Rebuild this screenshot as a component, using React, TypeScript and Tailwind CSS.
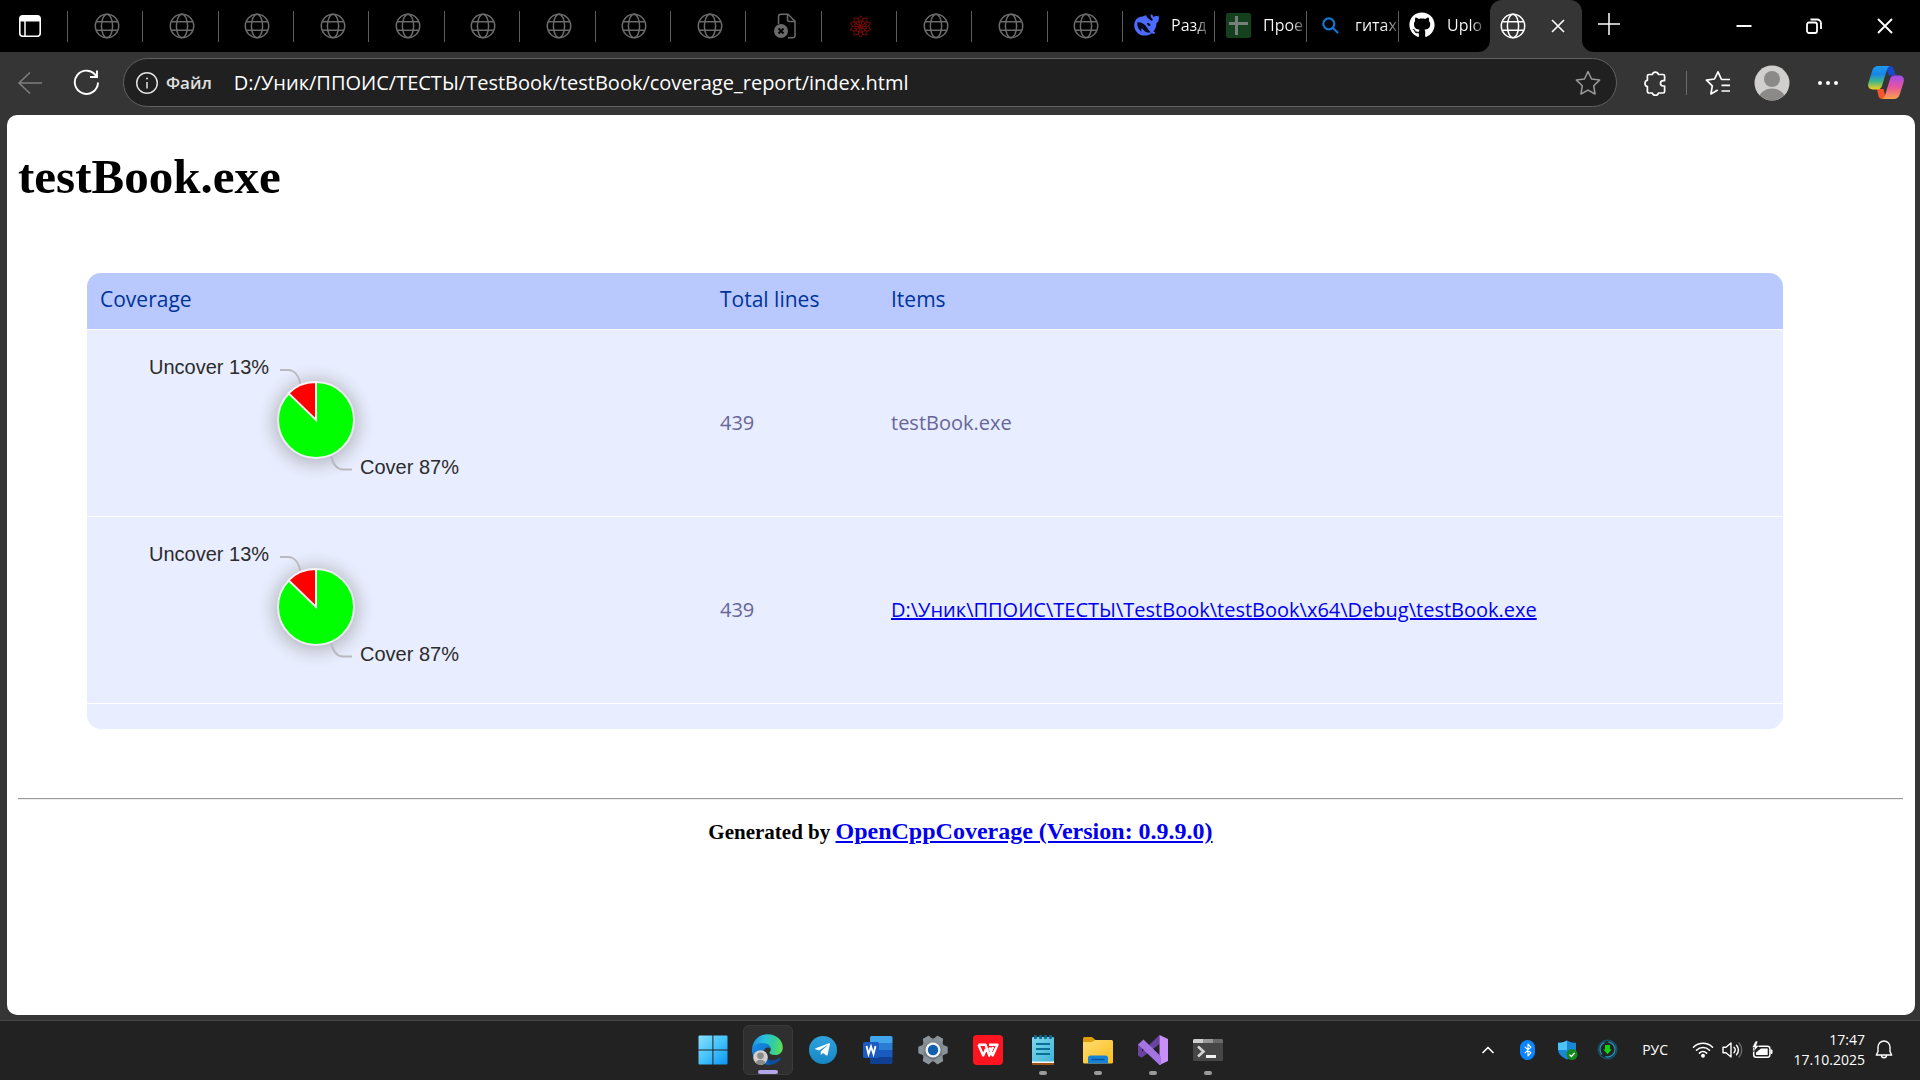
import React from "react";
import { FaGithub, FaTelegramPlane } from "react-icons/fa";
import { Bluetooth, ChevronUp } from "lucide-react";

const UI_FONT = "font-['Open_Sans','Noto_Sans',sans-serif]";

/* ---------- Tab strip icons ---------- */

function Globe() {
  return (
    <svg width="26" height="26" viewBox="0 0 26 26" fill="none" stroke="currentColor" strokeWidth="1.5">
      <circle cx="13" cy="13" r="11.7" />
      <ellipse cx="13" cy="13" rx="5.6" ry="11.7" />
      <path d="M2.2 8.7h21.6M2.2 17.3h21.6" />
    </svg>
  );
}

function BrokenFile() {
  return (
    <svg width="26" height="26" viewBox="0 0 26 26" fill="none">
      <path d="M6.5 11V3.5A2.3 2.3 0 0 1 8.8 1.200h7.200l7 7v14.300a2.300 2.300 0 0 1-2.300 2.300H16" stroke="#6b6b6b" strokeWidth="1.500" />
      <path d="M15.500 1.200v5.300a2 2 0 0 0 2 2H23" stroke="#6b6b6b" strokeWidth="1.500" />
      <circle cx="9" cy="18" r="7" fill="#6b6b6b" />
      <path d="m6.500 15.500 5 5m0-5-5 5" stroke="#000" strokeWidth="1.800" />
    </svg>
  );
}

function Spikey() {
  return (
    <svg width="23" height="23" viewBox="-12 -12 24 24" fill="none" stroke="#6a0a04" strokeWidth="1.100">
      {[0, 36, 72, 108, 144, 180, 216, 252, 288, 324].map((a) => (
        <path key={a} transform={`rotate(${a})`} d="M-3 -7.500 0 -11 3 -7.500M-2.400 -7.400 0 0 2.400 -7.400M-2.200 -4.500 0 -6.500 2.200 -4.500" />
      ))}
    </svg>
  );
}

function Whale() {
  return (
    <svg width="25" height="22" viewBox="0 0 25 22" fill="#4d6bfe">
      <path d="M24.500 1.600c-.6.500-1.300.6-2 .5-1.200-.1-2.200.3-3 1.200-.2-1.300-.9-2.100-2-2.700-.6-.3-.9-.6-.9-.3-.2 2 .3 3.500 1.700 4.600.5.400.6.700.4 1.200-.3.600-.9.700-1.600.3-1.500-.8-2.700-2-4-3.100-.5-.4-.8-.8-.4-1.100.3-.3 0-.7-.7-.7-1.300 0-2.300.5-3.500 1C3.600 2.900.3 6.200.2 11.200.1 16 4.100 21.400 10.400 21.600c3 .1 5.200-.7 7.200-2.300 1 .4 2.100.5 3 .2.800-.3.700-.9.100-1.200-.7-.3-1-.5-1.300-.7 1.900-2.300 3-5 3.100-8.100 0-.6.200-.8.700-1C24.600 7.900 25.500 4 24.500 1.600Z" />
      <path fill="#000" d="M3.500 8.200c3.300-.4 6 .9 8 3.400 1.800 2.300 3 4.800 5.300 6.700-4 1.200-6.500-.8-8.200-3.200-.5-.7-1.200-.7-1.300.1-.1.900.2 1.600.6 2.400-3.200-1.800-5.200-5.200-4.400-9.400Z" opacity=".9" />
      <path fill="#000" d="M13 9.200c1.300-.8 3.200.3 3.600 2.300-1.300.9-3.400-.2-3.600-2.300Z" />
    </svg>
  );
}

function Sheet() {
  return (
    <svg width="25" height="25" viewBox="0 0 25 25">
      <rect width="25" height="25" rx="2" fill="#14401d" />
      <path d="M10.500 3v19M3 10.500h19" stroke="#76807a" strokeWidth="3" />
    </svg>
  );
}

function SearchBlue() {
  return (
    <svg width="17" height="17" viewBox="0 0 17 17" fill="none" stroke="#0f78d4" strokeWidth="2.200">
      <circle cx="6.800" cy="6.800" r="5.500" />
      <path d="m10.800 10.800 5.200 5.200" />
    </svg>
  );
}

function TabActions() {
  return (
    <svg width="22" height="22" viewBox="0 0 22 22">
      <rect x=".8" y=".8" width="20.400" height="20.400" rx="3" fill="none" stroke="#fff" strokeWidth="1.600" />
      <path d="M1 3.500A2.500 2.500 0 0 1 3.500 1h15A2.500 2.500 0 0 1 21 3.500V6.500H1Z" fill="#fff" />
      <path d="M6 6v15" stroke="#fff" strokeWidth="1.500" />
    </svg>
  );
}

/* ---------- Toolbar icons ---------- */

const BackArrow = () => (
  <svg width="26" height="24" viewBox="0 0 26 24" fill="none" stroke="#7d7d7d" strokeWidth="1.600">
    <path d="M25 12H2M13 1.500 2 12l11 10.500" />
  </svg>
);

const Reload = () => (
  <svg width="27" height="27" viewBox="0 0 27 27" fill="none" stroke="#fff" strokeWidth="1.900">
    <path d="M23.300 7.200A11.600 11.600 0 1 0 25 13.500" />
    <path d="M24 1.500v6.500h-7" />
  </svg>
);

const Info = () => (
  <svg width="24" height="24" viewBox="0 0 24 24" fill="none" stroke="#e0e0e0" strokeWidth="1.500">
    <circle cx="12" cy="12" r="10.300" />
    <path d="M12 11v6.500" />
    <circle cx="12" cy="7.500" r="1" fill="#e0e0e0" stroke="none" />
  </svg>
);

const STAR = "m13 1.500 3.500 7.500 8.100 1.100-5.900 5.700 1.400 8.200L13 20.100 5.900 24l1.400-8.200L1.400 10.100 9.500 9Z";

const StarOutline = () => (
  <svg width="26" height="26" viewBox="0 0 26 26" fill="none" stroke="#9a9a9a" strokeWidth="1.500" strokeLinejoin="round">
    <path d={STAR} />
  </svg>
);

const Puzzle = () => (
  <svg width="24" height="26" viewBox="0 0 24 26" fill="none" stroke="#fff" strokeWidth="1.700" strokeLinejoin="round">
    <path d="M6 4.500h3.300a3.200 3.200 0 0 1 6.200 0H20a1.600 1.600 0 0 1 1.600 1.600v4.500h-1.400a2.700 2.700 0 0 0 0 5.400h1.400v5.400A1.600 1.600 0 0 1 20 23h-4.500a3.200 3.200 0 0 1-6.200 0H6a1.600 1.600 0 0 1-1.600-1.600V16.500a3.200 3.200 0 0 1 0-6.200V6.100A1.600 1.600 0 0 1 6 4.500Z" />
  </svg>
);

const Favorites = () => (
  <svg width="26" height="26" viewBox="0 0 26 26" fill="none" stroke="#fff" strokeWidth="1.700" strokeLinejoin="round">
    <path d="M25 9.500h-8.500L13 1.800 9.500 9 1.400 10.100l5.900 5.700L5.900 24l6.800-3.900M16.500 15.300H25M16.500 21H25" />
  </svg>
);

const Avatar = ({ size }: { size: number }) => (
  <svg width={size} height={size} viewBox="0 0 36 36">
    <defs>
      <clipPath id={`avatar-${size}`}>
        <circle cx="18" cy="18" r="17.500" />
      </clipPath>
    </defs>
    <circle cx="18" cy="18" r="17.500" fill="#d0cfcd" />
    <g clipPath={`url(#avatar-${size})`} fill="#8c8a88">
      <circle cx="18" cy="14" r="8" />
      <ellipse cx="18" cy="35" rx="13.500" ry="11.500" />
    </g>
  </svg>
);

const Copilot = () => (
  <svg width="36" height="33" viewBox="0 0 36 33">
    <defs>
      <linearGradient id="cp-a" x1="0" y1="0" x2="0" y2="1">
        <stop offset="0" stopColor="#1f9bf0" />
        <stop offset=".35" stopColor="#1787e8" />
        <stop offset=".65" stopColor="#3fb58a" />
        <stop offset="1" stopColor="#f5d020" />
      </linearGradient>
      <linearGradient id="cp-b" x1="0" y1="0" x2="0" y2="1">
        <stop offset="0" stopColor="#a24bf0" />
        <stop offset=".5" stopColor="#e8559b" />
        <stop offset="1" stopColor="#fba24c" />
      </linearGradient>
    </defs>
    <path d="M17 0h4.500c2.300 0 3.800 1.200 4.500 3.400l1.800 6H21Z" fill="#1a49c9" />
    <path d="M9 23h6.500l2.500 10h-3.500c-2.300 0-3.500-1.200-4.100-3.300Z" fill="#f4572e" />
    <path d="M10 0h12c-1.700.6-2.500 2-3.200 4.300l-4.600 15c-.8 2.700-2.100 4.200-4.700 4.200H4.700C1 23.500-.6 20.700.3 17.300L4.300 4.500C5.200 1.600 7.200 0 10 0Z" fill="url(#cp-a)" />
    <path d="M26 33H14c1.700-.6 2.500-2 3.200-4.300l4.600-15c.8-2.700 2.100-4.200 4.700-4.200h4.800c3.700 0 5.300 2.800 4.400 6.200l-4 12.800C30.800 31.400 28.800 33 26 33Z" fill="url(#cp-b)" />
  </svg>
);

/* ---------- Taskbar icons ---------- */

const WindowsLogo = () => (
  <svg width="30" height="30" viewBox="0 0 30 30">
    <defs>
      <linearGradient id="win" x1="0" y1="0" x2="30" y2="30" gradientUnits="userSpaceOnUse">
        <stop offset="0" stopColor="#8ae2fd" />
        <stop offset=".5" stopColor="#45c2fa" />
        <stop offset="1" stopColor="#0a93f5" />
      </linearGradient>
    </defs>
    <path fill="url(#win)" d="M1.500.5h12.900v13.900H.5V1.500a1 1 0 0 1 1-1ZM15.400.5h13.100a1 1 0 0 1 1 1v12.900H15.400ZM.5 15.400h13.900v14.100H1.500a1 1 0 0 1-1-1ZM15.400 15.400h14.100v13.100a1 1 0 0 1-1 1H15.400Z" />
  </svg>
);

const EdgeLogo = () => (
  <svg width="31" height="31" viewBox="0 0 31 31">
    <defs>
      <linearGradient id="edge-a" x1="0" y1="8" x2="31" y2="14" gradientUnits="userSpaceOnUse">
        <stop offset="0" stopColor="#1b8fe0" />
        <stop offset=".35" stopColor="#2ac0e0" />
        <stop offset=".7" stopColor="#32cf9a" />
        <stop offset="1" stopColor="#66e04c" />
      </linearGradient>
      <linearGradient id="edge-b" x1="0" y1="10" x2="16" y2="31" gradientUnits="userSpaceOnUse">
        <stop offset="0" stopColor="#1790e6" />
        <stop offset="1" stopColor="#0c5cb8" />
      </linearGradient>
    </defs>
    <path fill="#0d4f9e" d="M12 15c-1.500 5.500 1.500 10.500 7 11.200 3.600.4 6.300-.6 8.800-2.400.8-.5 1.300.1.900.8C26 29 21 31.300 15.500 30.800 9 30 6 20 12 15Z" />
    <path fill="url(#edge-b)" d="M.3 14C1.500 9 7 7.600 11 8c4.500.4 7.500 3.400 7.500 6.500-2.500-2.200-6.500-.8-6.800 3.500-.4 5.500 3 10.500 8 12.300C8.500 32.600-1 24-.0 15Z" />
    <path fill="url(#edge-a)" d="M.2 14.500C.8 6 7.500.2 15.700.2c8.300 0 15.100 5.800 15.100 13.200 0 4.800-3.500 7.700-8 7.700-3.500 0-5.300-1.200-5.300-2.300 0-.9 1.300-1.400 1.300-3.600 0-3.300-3.300-6.200-8-6.200C5.500 9 1.700 11 .2 14.500Z" />
  </svg>
);

const TelegramLogo = () => (
  <span className="flex size-7 items-center justify-center rounded-full bg-linear-to-b from-[#2fa3dd] to-[#1587c4] text-white">
    <FaTelegramPlane size={17} />
  </span>
);

const WordLogo = () => (
  <svg width="30" height="28" viewBox="0 0 30 28">
    <path fill="#41a5ee" d="M8.500 0H28a1.500 1.500 0 0 1 1.500 1.500V7H7V1.500A1.500 1.500 0 0 1 8.500 0Z" />
    <path fill="#2b7cd3" d="M7 7h22.500v7H7Z" />
    <path fill="#185abd" d="M7 14h22.500v7H7Z" />
    <path fill="#103f91" d="M7 21h22.500v5.500A1.500 1.500 0 0 1 28 28H8.500A1.500 1.500 0 0 1 7 26.500Z" />
    <rect x="0" y="6" width="16" height="16" rx="1.500" fill="#1b5bbf" />
    <path d="m3.500 10 2 8L8 10.500l2.500 7.500 2-8" fill="none" stroke="#fff" strokeWidth="1.900" />
  </svg>
);

const Gear = () => (
  <svg width="30" height="30" viewBox="-15 -15 30 30">
    <defs>
      <linearGradient id="gear" x1="0" y1="-14" x2="0" y2="14" gradientUnits="userSpaceOnUse">
        <stop offset="0" stopColor="#8d959c" />
        <stop offset="1" stopColor="#626d77" />
      </linearGradient>
    </defs>
    <g fill="url(#gear)">
      <circle r="11.500" />
      {[30, 90, 150, 210, 270, 330].map((a) => (
        <path key={a} transform={`rotate(${a})`} d="M-5.500 -9 -3.600 -14a1 1 0 0 1 1 -.7h5.200a1 1 0 0 1 1 .7L5.500 -9Z" />
      ))}
    </g>
    <circle r="7.500" fill="#f2f2f2" />
    <circle r="5.200" fill="#0f5fae" />
  </svg>
);

const WpsLogo = () => (
  <svg width="30" height="30" viewBox="0 0 30 30">
    <rect width="30" height="30" rx="4" fill="#ff1420" />
    <path d="M5.500 9.800h7l3.800 10.700L20 12M5.500 9.800l4.700 10.700 2.800-6.500M16 9.800h8.500L19.700 20.500l-3.400-8" fill="none" stroke="#fff" strokeWidth="2.400" strokeLinejoin="round" />
  </svg>
);

const Notepad = () => (
  <svg width="24" height="30" viewBox="0 0 24 30">
    <defs>
      <linearGradient id="note" x1="0" y1="0" x2="1" y2="1">
        <stop offset="0" stopColor="#7fd8ee" />
        <stop offset="1" stopColor="#40b4d6" />
      </linearGradient>
    </defs>
    <rect x="1" y="24" width="22" height="6" rx="1" fill="#9c4f17" />
    <rect x="1" y="22" width="22" height="6" fill="#f4f4f4" />
    <rect x="1" y="2" width="22" height="24.500" rx="1" fill="url(#note)" />
    <path d="M5 9h14M5 14h14M5 19h14" stroke="#0b6f96" strokeWidth="2" />
    <path d="M4.500 0v4M9.500 0v4M14.500 0v4M19.500 0v4" stroke="#0a6a90" strokeWidth="2.600" />
  </svg>
);

const Folder = () => (
  <svg width="30" height="28" viewBox="0 0 30 28">
    <defs>
      <linearGradient id="fold" x1="0" y1="0" x2="1" y2="1">
        <stop offset="0" stopColor="#ffdc72" />
        <stop offset="1" stopColor="#fdbf1c" />
      </linearGradient>
    </defs>
    <path d="M0 2.500A1.500 1.500 0 0 1 1.500 1H9l3.500 3v4H0Z" fill="#e09d08" />
    <path d="M0 6h9l3-2h16.500A1.500 1.500 0 0 1 30 5.500V26a1.500 1.500 0 0 1-1.500 1.500h-27A1.500 1.500 0 0 1 0 26Z" fill="url(#fold)" />
    <path d="M5 27.500V22a2.500 2.500 0 0 1 2.500-2.500h15A2.500 2.500 0 0 1 25 22v5.500Z" fill="#1683d8" />
    <path d="M8.500 23.500h13" stroke="#0a559c" strokeWidth="1.500" />
  </svg>
);

const VisualStudio = () => (
  <svg width="30" height="30" viewBox="0 0 30 30">
    <path d="M0 9.500 4 7.500v15L0 20.500Z" fill="#6a43a5" />
    <path d="M0 20.500 21.500 0v9L4 22.500Z" fill="#68439f" />
    <path d="M21.500 0 30 4v22l-8.500 4Z" fill="#c78ffa" />
    <path d="M0 9.500 5.500 4.500 23 21.500V30h-1.500Z" fill="#a574e3" />
  </svg>
);

const Terminal = () => (
  <svg width="30" height="22" viewBox="0 0 30 22">
    <rect width="30" height="22" rx="1.500" fill="#464646" />
    <path d="M1.500 0H10v4H0V1.500A1.500 1.500 0 0 1 1.500 0Z" fill="#cfcfcf" />
    <path d="M10 0h10v4H10Z" fill="#989898" />
    <path d="M20 0h8.500A1.500 1.500 0 0 1 30 1.500V4H20Z" fill="#6a6a6a" />
    <path d="m5 7.500 5.500 5-5.500 5" fill="none" stroke="#d2d2d2" strokeWidth="2.600" />
    <path d="M13 17.500h10" stroke="#f2f2f2" strokeWidth="3" />
  </svg>
);

/* ---------- Tray icons ---------- */

const Shield = () => (
  <svg width="20" height="20" viewBox="0 0 20 20">
    <path d="M9 .5c2.500 1.800 5.500 2.300 9 2.300v6.400c0 5-4 7.800-9 10.300-5-2.500-9-5.300-9-10.300V2.800c3.500 0 6.500-.5 9-2.300Z" fill="#1b85d6" />
    <path d="M9 .5v9.500H0V2.800c3.500 0 6.500-.5 9-2.300Z" fill="#4cc3f5" />
    <circle cx="14" cy="14.500" r="5.500" fill="#128a1d" />
    <path d="m11.500 14.600 1.900 1.900 3.300-3.600" fill="none" stroke="#fff" strokeWidth="1.300" />
  </svg>
);

const DownloadBadge = () => (
  <svg width="21" height="21" viewBox="0 0 21 21" fill="none">
    <circle cx="10.500" cy="10.500" r="9.300" stroke="#17506a" strokeWidth="1.500" />
    <circle cx="10.500" cy="10.500" r="7.500" stroke="#2394b8" strokeWidth="1.300" strokeDasharray="14 4" />
    <path d="M8 6h5v4.500h1.700l-4.200 4.700-4.200-4.700H8Z" fill="#12d312" />
  </svg>
);

const Wifi = () => (
  <svg width="22" height="17" viewBox="0 0 22 17" fill="none" stroke="#fff" strokeWidth="1.500" strokeLinecap="round">
    <path d="M1.500 6.200a13.400 13.400 0 0 1 19 0M4.500 9.200a9.200 9.200 0 0 1 13 0M7.400 12.100a5.100 5.100 0 0 1 7.200 0" />
    <circle cx="11" cy="14.800" r="1.200" fill="#fff" />
  </svg>
);

const Speaker = () => (
  <svg width="21" height="18" viewBox="0 0 21 18" fill="none" stroke="#fff" strokeWidth="1.400" strokeLinejoin="round" strokeLinecap="round">
    <path d="M1 6.200h3L9 2v14l-5-4.200H1Z" />
    <path d="M12 6.300a4 4 0 0 1 0 5.400M14.500 4.200a7 7 0 0 1 0 9.600" />
    <path d="M17 2a10.500 10.500 0 0 1 0 14" stroke="#6a6a6a" />
  </svg>
);

const Battery = () => (
  <svg width="21" height="18" viewBox="0 0 21 18">
    <rect x="1.700" y="5.200" width="16.200" height="11" rx="2.500" fill="none" stroke="#fff" strokeWidth="1.500" />
    <path d="M4 14V11.500L9 7.500H15.700V14Z" fill="#fff" />
    <path d="M18.500 8.500h1a1 1 0 0 1 1 1v2.500a1 1 0 0 1-1 1h-1Z" fill="#fff" />
    <path d="M3.500 0 0 6.500h2.500L1.500 11 7 4.500H4.500L6 0Z" fill="#fff" stroke="#222" strokeWidth=".6" />
  </svg>
);

const Bell = () => (
  <svg width="18" height="19" viewBox="0 0 18 19" fill="none" stroke="#fff" strokeWidth="1.400" strokeLinejoin="round">
    <path d="M9 1a6 6 0 0 0-6 6v4.500L1.300 15h15.400L15 11.500V7a6 6 0 0 0-6-6ZM6.500 15.300a2.500 2.500 0 0 0 5 0" />
  </svg>
);

/* ---------- Browser chrome ---------- */

function Divider() {
  return <span className="h-[31px] w-px shrink-0 bg-[#5c5c5c]" />;
}

const COLLAPSED: React.ReactNode[] = [
  ...Array.from({ length: 9 }, () => <Globe />),
  <BrokenFile />,
  <Spikey />,
  <Globe />,
  <Globe />,
  <Globe />,
];

const TITLED = [
  { title: "Разд", icon: <Whale /> },
  { title: "Прое", icon: <Sheet /> },
  { title: "гитах", icon: <SearchBlue /> },
  { title: "Uplo", icon: <FaGithub size={26} /> },
];

function TabStrip() {
  return (
    <div className="flex h-[52px] shrink-0 items-center bg-black text-white">
      <button aria-label="Tab actions" className="flex h-full w-[67px] shrink-0 items-center pl-[19px]">
        <TabActions />
      </button>
      <div role="tablist" className="flex h-full min-w-0 flex-1 items-center">
        <div className="flex h-full min-w-0 max-w-[1055px] flex-[14] items-center">
          {COLLAPSED.map((icon, i) => (
            <React.Fragment key={i}>
              <Divider />
              <button role="tab" aria-label={`Tab ${i + 1}`} className="flex h-full min-w-0 flex-1 items-center justify-center pl-[3px] text-[#6b6b6b]">
                {icon}
              </button>
            </React.Fragment>
          ))}
        </div>
        {TITLED.map((t) => (
          <React.Fragment key={t.title}>
            <Divider />
            <button role="tab" className={`flex h-full w-[91px] shrink-0 items-center gap-3 pb-0.5 pl-[10px] text-[16px] whitespace-nowrap ${UI_FONT}`}>
              <span className="flex w-[26px] shrink-0 justify-center">{t.icon}</span>
              <span className="bg-linear-to-r from-white from-70% to-[#555555] bg-clip-text text-transparent">{t.title}</span>
            </button>
          </React.Fragment>
        ))}
        <div className="relative flex h-full w-[92px] shrink-0 items-center justify-between rounded-t-xl bg-[#353535] pr-4 pl-[10px]">
          <svg className="absolute bottom-0 -left-3" width="12" height="12" viewBox="0 0 12 12">
            <path d="M12 0v12H0A12 12 0 0 0 12 0Z" fill="#353535" />
          </svg>
          <svg className="absolute -right-3 bottom-0" width="12" height="12" viewBox="0 0 12 12">
            <path d="M0 0v12h12A12 12 0 0 1 0 0Z" fill="#353535" />
          </svg>
          <button role="tab" aria-selected="true" aria-label="Coverage report">
            <Globe />
          </button>
          <button aria-label="Close tab">
            <svg width="16" height="16" viewBox="0 0 16 16" stroke="#fff" strokeWidth="1.600">
              <path d="m2 2 12 12M14 2 2 14" />
            </svg>
          </button>
        </div>
        <button aria-label="New tab" className="flex h-full w-[54px] shrink-0 items-center justify-center pb-1">
          <svg width="22" height="22" viewBox="0 0 22 22" stroke="#fff" strokeWidth="1.500">
            <path d="M11 0v22M0 11h22" />
          </svg>
        </button>
      </div>
      <div className="flex h-full shrink-0">
        <button aria-label="Minimize" className="flex w-[70px] items-center justify-center">
          <svg width="16" height="16" viewBox="0 0 16 16" stroke="#fff" strokeWidth="2">
            <path d="M.5 8h15" />
          </svg>
        </button>
        <button aria-label="Restore" className="flex w-[70px] items-center justify-center">
          <svg width="16" height="16" viewBox="0 0 16 16" fill="none" stroke="#fff" strokeWidth="1.800">
            <rect x="1" y="4.500" width="10" height="10.500" rx="2" />
            <path d="M4.500 1.500H11a4 4 0 0 1 4 4V11" />
          </svg>
        </button>
        <button aria-label="Close" className="flex w-[71px] items-center justify-center">
          <svg width="16" height="16" viewBox="0 0 16 16" stroke="#fff" strokeWidth="1.900">
            <path d="m1 1 14 14M15 1 1 15" />
          </svg>
        </button>
      </div>
    </div>
  );
}

function Toolbar() {
  return (
    <div className={`flex h-[63px] shrink-0 items-center pr-[5px] pb-0.5 text-white ${UI_FONT}`}>
      <button aria-label="Back" className="flex w-[60px] justify-center">
        <BackArrow />
      </button>
      <button aria-label="Reload" className="flex w-[52px] justify-center">
        <Reload />
      </button>
      <div className="mx-[11px] flex h-[49px] min-w-0 flex-1 items-center rounded-full border border-[#626262] bg-[#202020] pr-[15px] pl-[11px]">
        <button className="flex items-center gap-[7px] text-[17px] font-semibold text-[#e0e0e0]">
          <Info />
          Файл
        </button>
        <input
          aria-label="Address"
          className="ml-[22px] min-w-0 flex-1 bg-transparent text-[20px] text-white outline-none"
          defaultValue="D:/Уник/ППОИС/ТЕСТЫ/TestBook/testBook/coverage_report/index.html"
        />
        <button aria-label="Add to favorites">
          <StarOutline />
        </button>
      </div>
      <button aria-label="Extensions" className="flex w-[54px] justify-center">
        <Puzzle />
      </button>
      <span className="mx-1 h-6 w-px bg-[#6a6a6a]" />
      <button aria-label="Favorites" className="flex w-[54px] justify-center">
        <Favorites />
      </button>
      <button aria-label="Profile" className="flex w-[54px] justify-center">
        <Avatar size={36} />
      </button>
      <button aria-label="Settings and more" className="flex w-[58px] justify-center">
        <svg width="22" height="6" viewBox="0 0 22 6" fill="#fff">
          <circle cx="3" cy="3" r="2" />
          <circle cx="11" cy="3" r="2" />
          <circle cx="19" cy="3" r="2" />
        </svg>
      </button>
      <button aria-label="Copilot" className="flex w-[58px] justify-center">
        <Copilot />
      </button>
    </div>
  );
}

/* ---------- Report page ---------- */

function CoveragePie() {
  return (
    <svg className="block" width="450" height="150" viewBox="0 0 450 150" role="img" aria-label="Cover 87%, uncover 13%">
      <defs>
        <radialGradient id="halo">
          <stop offset=".55" stopColor="#8c8c8c" stopOpacity=".5" />
          <stop offset=".75" stopColor="#a0a0a0" stopOpacity=".22" />
          <stop offset="1" stopColor="#e8edff" stopOpacity="0" />
        </radialGradient>
      </defs>
      <circle cx="216" cy="74" r="61" fill="url(#halo)" />
      <g fill="none" stroke="#b9b9bf" strokeWidth="2">
        <path d="M180 22h8c7 0 11 7 12.500 14" />
        <path d="M231 108c2 8 6 13.500 12 13.500h9" />
      </g>
      <circle cx="216" cy="72" r="38" fill="#00ff00" stroke="#eef0f4" strokeWidth="2" />
      <path d="M216 72V34a38 38 0 0 0-27.500 11.200Z" fill="#ff0000" stroke="#f4f4f8" strokeWidth="2" />
      <g className="font-['Liberation_Sans',Arial,sans-serif]" fontSize="20" fill="#2b2b2b">
        <text x="49" y="26">Uncover 13%</text>
        <text x="260" y="126">Cover 87%</text>
      </g>
    </svg>
  );
}

const LINK_TEXT = "D:\\Уник\\ППОИС\\ТЕСТЫ\\TestBook\\testBook\\x64\\Debug\\testBook.exe";

function Report() {
  return (
    <main className="mr-[5px] ml-[7px] flex-1 rounded-[10px] bg-white pt-[33px] pr-3 pl-[11px] font-['Liberation_Serif','Times_New_Roman',serif] text-black">
      <h1 className="text-[49px] leading-[58px] font-bold">testBook.exe</h1>
      <div className={`mt-[67px] mr-[120px] ml-[69px] overflow-hidden rounded-[14px] ${UI_FONT}`}>
        <table className="w-full table-fixed border-collapse text-left">
          <colgroup>
            <col className="w-[620px]" />
            <col className="w-[171px]" />
            <col />
          </colgroup>
          <thead className="bg-[#b9c9fe] text-[21px] text-[#003399]">
            <tr className="h-14">
              <th className="px-[13px] pb-0.5 font-normal">Coverage</th>
              <th className="px-[13px] pb-0.5 font-normal">Total lines</th>
              <th className="px-[13px] pb-0.5 font-normal">Items</th>
            </tr>
          </thead>
          <tbody className="bg-[#e8edff] text-[20px] text-[#666699]">
            <tr className="h-[187px] border-t border-white">
              <td className="px-[13px]"><CoveragePie /></td>
              <td className="px-[13px]">439</td>
              <td className="px-[13px]">testBook.exe</td>
            </tr>
            <tr className="h-[187px] border-t border-white">
              <td className="px-[13px]"><CoveragePie /></td>
              <td className="px-[13px]">439</td>
              <td className="px-[13px]">
                <a href="#report" className="text-[#0000ee] underline">{LINK_TEXT}</a>
              </td>
            </tr>
          </tbody>
          <tfoot className="bg-[#e8edff]">
            <tr className="h-[26px] border-t border-white">
              <td colSpan={3} />
            </tr>
          </tfoot>
        </table>
      </div>
      <hr className="mt-[69px] border-t border-b border-t-[#9a9a9a] border-b-[#eeeeee]" />
      <p className="mt-[15px] text-center text-[21px] leading-8 font-bold">
        Generated by{" "}
        <a href="#opencppcoverage" className="text-[24px] text-[#0000ee] underline">OpenCppCoverage (Version: 0.9.9.0)</a>
      </p>
    </main>
  );
}

/* ---------- Taskbar ---------- */

const APPS = [
  { name: "Start", icon: <WindowsLogo />, open: false },
  { name: "Edge", icon: <EdgeLogo />, open: true },
  { name: "Telegram", icon: <TelegramLogo />, open: false },
  { name: "Word", icon: <WordLogo />, open: false },
  { name: "Settings", icon: <Gear />, open: false },
  { name: "WPS", icon: <WpsLogo />, open: false },
  { name: "Notepad", icon: <Notepad />, open: true },
  { name: "Explorer", icon: <Folder />, open: true },
  { name: "Visual Studio", icon: <VisualStudio />, open: true },
  { name: "Terminal", icon: <Terminal />, open: true },
];

function Taskbar() {
  return (
    <footer className={`mt-[5px] grid h-[60px] shrink-0 grid-cols-[1fr_auto_1fr] items-center border-t border-[#454545] bg-[#222222] pb-0.5 text-white ${UI_FONT}`}>
      <span />
      <nav aria-label="Apps" className="flex gap-[5px]">
        {APPS.map((a) => {
          const active = a.name === "Edge";
          return (
            <button
              key={a.name}
              aria-label={a.name}
              className={`relative flex size-[50px] items-center justify-center rounded-md ${active ? "border border-[#3a3a3a] bg-[#2f2f2f]" : ""}`}
            >
              {a.icon}
              {active && (
                <span className="absolute bottom-[9px] left-[9px]">
                  <Avatar size={15} />
                </span>
              )}
              {a.open && (
                <span className={`absolute bottom-0 h-1 rounded-full ${active ? "w-5 bg-[#b4a7e8]" : "w-2 bg-[#9a9a9a]"}`} />
              )}
            </button>
          );
        })}
      </nav>
      <div className="flex items-center justify-end pr-[17px] text-[14px]">
        <button aria-label="Hidden icons" className="flex w-10 justify-center">
          <ChevronUp size={20} strokeWidth={2} />
        </button>
        <button aria-label="Bluetooth" className="flex w-10 justify-center">
          <span className="flex h-5 w-[15px] items-center justify-center rounded-full bg-[#0a84ff]">
            <Bluetooth size={14} strokeWidth={2} />
          </span>
        </button>
        <button aria-label="Security" className="flex w-10 justify-center">
          <Shield />
        </button>
        <button aria-label="Downloads" className="flex w-10 justify-center">
          <DownloadBadge />
        </button>
        <button className="w-[55px] text-center">РУС</button>
        <button aria-label="Network, sound and battery" className="ml-[5px] flex items-center">
          <span className="flex w-[30px] justify-center"><Wifi /></span>
          <span className="flex w-[30px] justify-center"><Speaker /></span>
          <span className="flex w-[30px] justify-center"><Battery /></span>
        </button>
        <button className="ml-4 text-right leading-5">
          17:47
          <br />
          17.10.2025
        </button>
        <button aria-label="Notifications" className="flex w-[38px] justify-center">
          <Bell />
        </button>
      </div>
    </footer>
  );
}

export default function App() {
  return (
    <div className="flex min-h-screen flex-col bg-[#353535]">
      <TabStrip />
      <Toolbar />
      <Report />
      <Taskbar />
    </div>
  );
}
